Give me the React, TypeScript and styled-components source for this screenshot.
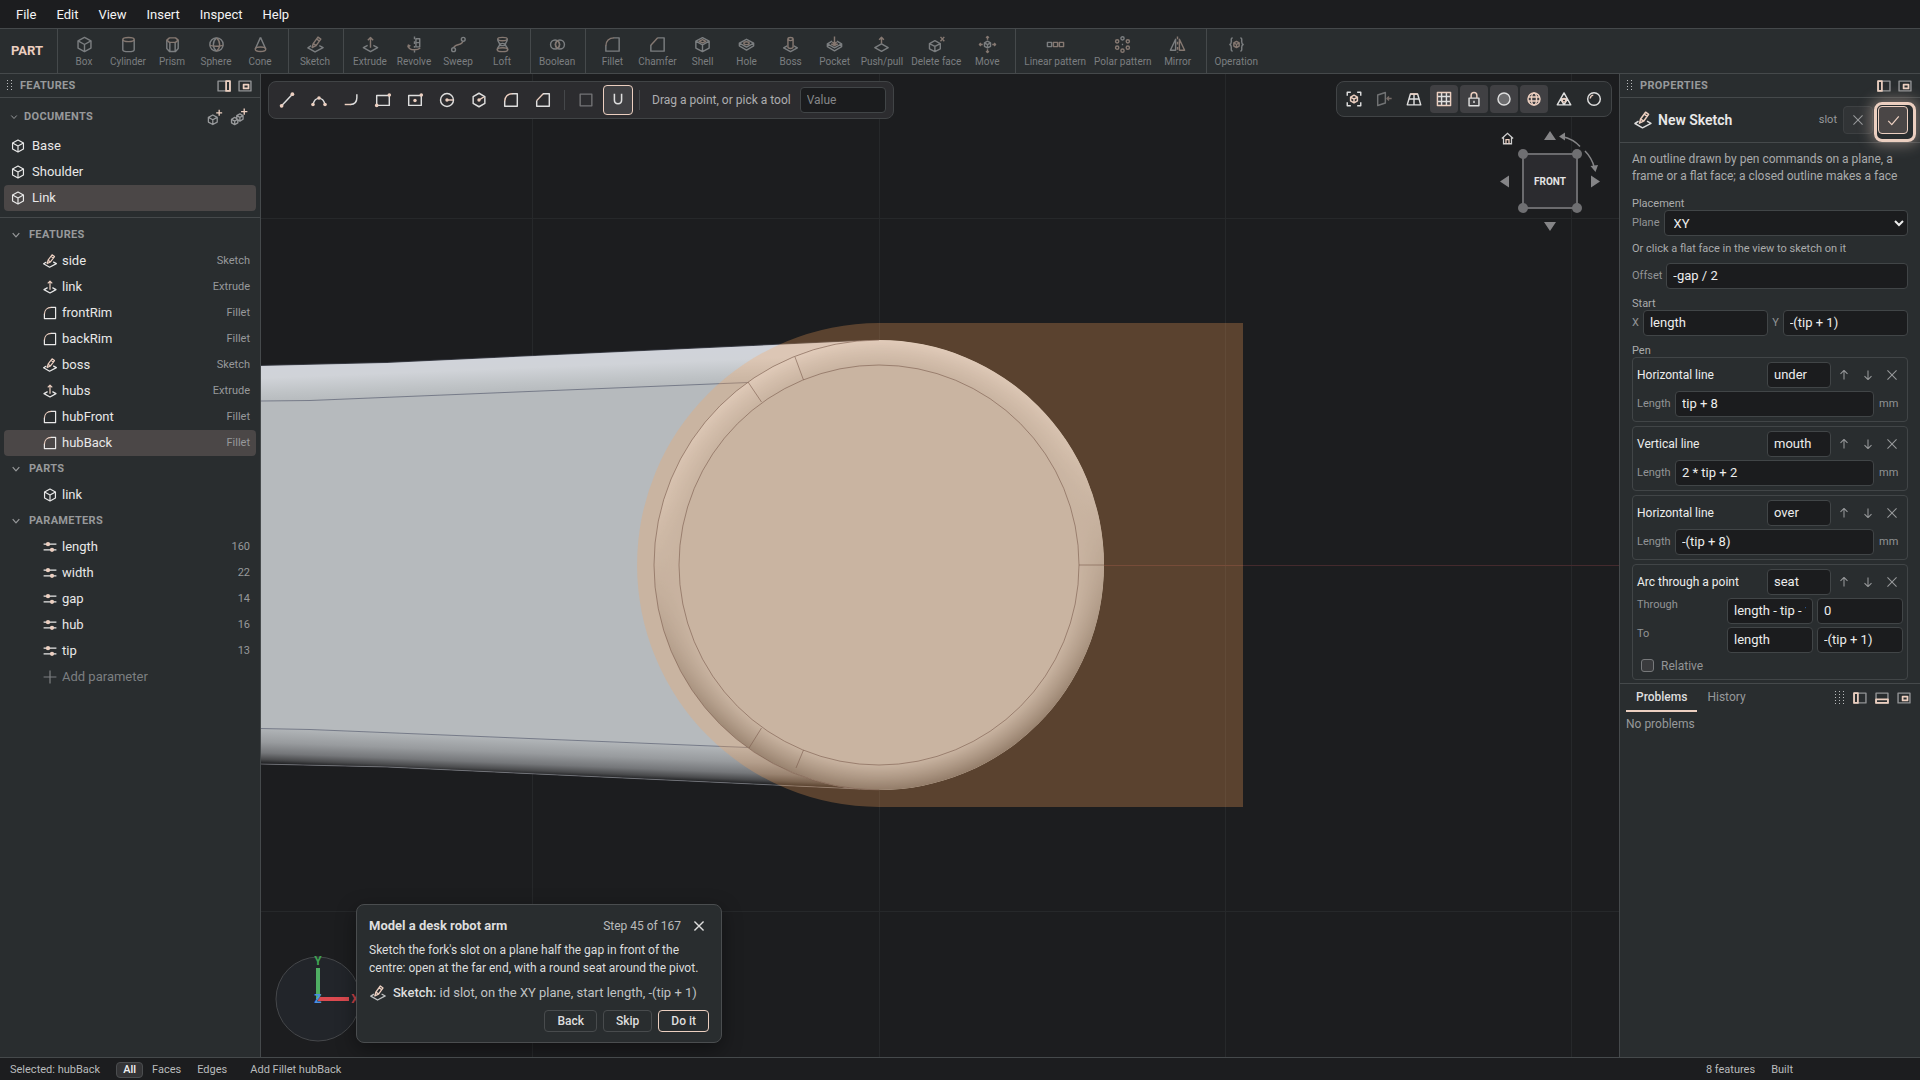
import React from "react";
import styled, { createGlobalStyle, css } from "styled-components";

const c = {
  dark: "#1c1d1f",
  panel: "#292d2f",
  line: "#45494b",
  text: "#dedede",
  soft: "#b9bbbc",
  dim: "#97999b",
  faint: "#707375",
  accent: "#eccfc0",
  selected: "#4b4747",
  float: "#2c2c2f",
};

const Global = createGlobalStyle`
  *, *::before, *::after { box-sizing: border-box; }
  html, body, #root { height: 100%; }
  body {
    margin: 0;
    background: ${c.dark};
    color: ${c.text};
    font: 400 13px/16px Roboto, "Liberation Sans", sans-serif;
    overflow: hidden;
  }
  button, input, select { font: inherit; color: inherit; margin: 0; }
  button { background: none; border: 0; padding: 0; cursor: pointer; }
  h2, h3, p, ul { margin: 0; padding: 0; font: inherit; list-style: none; }
`;

/* ---------- icons ---------- */

const a = { stroke: c.accent };
const af = { fill: c.accent, stroke: "none" };

const glyphs: Record<string, React.ReactNode> = {
  box: (
    <>
      <path d="M10 2.5 16.8 6.2v7.6L10 17.5l-6.8-3.7V6.2z" />
      <path d="M3.2 6.2 10 10l6.8-3.8M10 10v7.5" />
    </>
  ),
  cylinder: (
    <>
      <path d="M4 4.8v10.6c0 1.2 2.7 2.1 6 2.1s6-.9 6-2.1V4.8" />
      <ellipse {...a} cx="10" cy="4.8" rx="6" ry="2.2" />
    </>
  ),
  prism: (
    <>
      <path d="M4 5.5v8.8l2.8 3h6.4l2.8-3V5.5M7.2 8v9M12.8 8v9" />
      <path {...a} d="M4 5.4 6.8 3h6.4L16 5.4l-2.8 2.4H6.8z" />
    </>
  ),
  sphere: (
    <>
      <circle cx="10" cy="10" r="7" />
      <path d="M10 3C7.5 5 6.7 7.5 6.7 10s.8 5 3.3 7" />
      <path {...a} d="M3 10.5c2 1.7 12 1.7 14 0M10 3c2.500 2 3.300 4.500 3.300 7s-.8 5-3.300 7" />
    </>
  ),
  cone: (
    <>
      <path d="M10 2.5 4.500 14.800M10 2.500l5.500 12.300" />
      <ellipse {...a} cx="10" cy="15" rx="5.5" ry="2.3" />
    </>
  ),
  sketch: (
    <>
      <path d="M5.500 11.200 2 13.500l7.500 4.300 8.500-4.500-4-2.200" />
      <path {...a} d="M6.500 13.200 7.600 9l5-6.800 3 2.200-5 6.800zM7.700 9l3 2.200M11.200 4.200l3 2.200" />
    </>
  ),
  extrude: (
    <>
      <path d="M7 10.800 2.500 13.300 10 17.500l7.500-4.200L13 10.800" />
      <path {...a} d="M10 13.500V2.800M7.200 5.500 10 2.700l2.800 2.800" />
    </>
  ),
  revolve: (
    <>
      <path d="M10 1.500v3M10 6.500v3M10 11.500v2M10 16v2.500" />
      <path d="M11.500 4h4v8.500h-4zM11.500 8h4" />
      <path {...a} d="M3.500 11c0 3 3 4.600 6.500 4.600 2.500 0 4.500-.6 6-2M3 13l.5-2.400 2.200 1" />
    </>
  ),
  sweep: (
    <>
      <path {...a} d="M5 13.500c0-4 9.500-2.500 9.500-7" />
      <circle cx="4.800" cy="15.500" r="2" />
      <circle cx="15" cy="4.500" r="2" />
    </>
  ),
  loft: (
    <>
      <ellipse {...a} cx="10" cy="4.300" rx="5" ry="1.800" />
      <path d="M5 4.500c0 3 2 3.500 2 5.500s-2.500 3-2.500 5.500M15 4.500c0 3-2 3.500-2 5.500s2.500 3 2.500 5.500" />
      <ellipse cx="10" cy="10" rx="3" ry="1.200" />
      <ellipse {...a} cx="10" cy="15.500" rx="5.500" ry="2" />
    </>
  ),
  boolean: (
    <>
      <circle cx="7.500" cy="10" r="4.800" />
      <circle cx="12.500" cy="10" r="4.800" />
      <path {...a} d="M10 6c-2.800 2.400-2.800 5.600 0 8 2.800-2.400 2.800-5.600 0-8z" />
    </>
  ),
  fillet: (
    <>
      <path d="M11 3h6v14H3v-6" />
      <path {...a} d="M3 11.500C3 6.500 6.500 3 11.500 3" />
    </>
  ),
  chamfer: (
    <>
      <path d="M10 3h7v14H3v-6.500" />
      <path {...a} d="M3 10.700 10.200 3" />
    </>
  ),
  shell: (
    <>
      <path d="M10 2.800 17 6.500v7.200l-7 3.800-7-3.800V6.500zM3 6.500l7 3.800 7-3.800M10 10.300v7.200" />
      <path {...a} d="M10 4.800 13.500 6.600 10 8.400 6.500 6.600z" />
    </>
  ),
  hole: (
    <>
      <path d="M10 4.500 17.500 8.500v3L10 15.800l-7.500-4.300v-3zM2.500 8.500 10 12.700l7.500-4.200" />
      <ellipse {...a} cx="10" cy="8.600" rx="2.800" ry="1.500" />
    </>
  ),
  boss: (
    <>
      <path d="M6.500 11.500 2.800 13.500l7.200 4 7.200-4-3.700-2" />
      <path {...a} d="M7.300 4.500v8.200c0 2 5.400 2 5.400 0V4.500" />
      <ellipse {...a} cx="10" cy="4.300" rx="2.700" ry="1.600" />
    </>
  ),
  pocket: (
    <>
      <path d="M7.500 6.500 2.500 9.300v3L10 16.700l7.500-4.400v-3l-5-2.800M2.500 9.300 10 13.500l7.500-4.200" />
      <path {...a} d="M10 1.500v8M7.800 7.500 10 9.700l2.200-2.200M6.500 9.300l3.500 2 3.500-2" />
    </>
  ),
  push: (
    <>
      <path {...a} d="M10 9V2.500M7.500 5 10 2.500 12.500 5" />
      <path d="M10 9.300 17 13.200l-7 4-7-4z" />
    </>
  ),
  deleteFace: (
    <>
      <path d="M8.300 6 14 9v5.500l-5.700 3-5.700-3V9zM2.600 9l5.700 3L14 9M8.300 12v5.500" />
      <path {...a} d="m14.200 2 4 4.500M18.200 2l-4 4.500" />
    </>
  ),
  move: (
    <>
      <path {...a} d="M10 5V1.500M8.500 3 10 1.500 11.500 3M10 15v3.500M8.500 17l1.500 1.500 1.500-1.500M5 10H1.500M3 8.500 1.500 10 3 11.500M15 10h3.500M17 8.500l1.500 1.500-1.500 1.500" />
      <path d="m10 6.500 3.200 1.800v3.600L10 13.600l-3.200-1.700V8.300zM6.800 8.300l3.200 1.800 3.200-1.800M10 10.100v3.500" />
    </>
  ),
  linear: (
    <>
      <path d="M1.500 7.800h4.400v4.400H1.500z" />
      <path {...a} d="M7.800 7.800h4.400v4.400H7.800zM14.100 7.800h4.400v4.400h-4.400z" />
    </>
  ),
  polar: (
    <>
      <circle cx="10" cy="3.500" r="1.700" />
      <circle {...a} cx="15.600" cy="6.700" r="1.700" />
      <circle {...a} cx="15.600" cy="13.300" r="1.700" />
      <circle {...a} cx="10" cy="16.500" r="1.700" />
      <circle {...a} cx="4.400" cy="13.300" r="1.700" />
      <circle {...a} cx="4.400" cy="6.700" r="1.700" />
      <path d="M9.300 10h1.400" />
    </>
  ),
  mirror: (
    <>
      <path d="M8 4.500 2.500 16H8z" />
      <path {...a} d="M12 4.500 17.500 16H12zM10 1.500v3M10 7v3M10 12.500v3M10 17.500v1" />
    </>
  ),
  operation: (
    <>
      <path d="M6 3C4 3 4.500 5 4.500 7S4 9.500 3 10c1 .5 1.500 1 1.500 3S4 17 6 17M14 3c2 0 1.500 2 1.500 4s.5 2.500 1.500 3c-1 .5-1.500 1-1.500 3s.5 4-1.500 4" />
      <path {...a} d="m10 6.800 2.800 1.600v3.200L10 13.200l-2.800-1.600V8.400zM7.200 8.400 10 10l2.800-1.600M10 10v3.200" />
    </>
  ),
  param: (
    <>
      <path d="M2 6.500h16M2 13.500h16" />
      <circle {...af} cx="7.500" cy="6.500" r="2.700" />
      <circle {...af} cx="12.500" cy="13.500" r="2.700" />
    </>
  ),
  plus: <path d="M10 2v16M2 10h16" />,
  chevron: <path d="m4.500 7 5.500 6 5.500-6" />,
  newPart: (
    <>
      <path d="m8 7 5.200 2.800v5.600L8 18.300l-5.200-2.900V9.800zM2.800 9.800 8 12.600l5.200-2.800M8 12.600v5.700" />
      <path {...a} d="M15.500 1v7M12 4.500h7" />
    </>
  ),
  newAssembly: (
    <>
      <path d="m5.200 10.500 3.500 2v4l-3.500 2-3.500-2v-4zM1.700 12.500l3.500 2 3.500-2M5.200 14.500v4M11 6.500l3.500 2v4l-3.500 2-3.500-2v-4zM7.500 8.500l3.500 2 3.500-2M11 10.500v4" />
      <path {...a} d="M15.800.5v7M12.300 4h7" />
    </>
  ),
  segment: (
    <>
      <path d="m4.500 15.800 11-11.600" />
      <circle {...af} cx="4" cy="16.500" r="2.100" />
      <circle {...af} cx="16" cy="3.500" r="2.100" />
    </>
  ),
  arc: (
    <>
      <path d="M3.500 14.500C4.500 10.500 7 8.200 10 8.200s5.500 2.300 6.500 6.300" />
      <circle {...af} cx="3.300" cy="15" r="2" />
      <circle {...af} cx="16.700" cy="15" r="2" />
      <circle {...af} cx="10" cy="7.800" r="2" />
    </>
  ),
  tangent: (
    <>
      <path d="M16.500 3.500v4c0 5-3 7.500-7 7.500" />
      <path {...a} d="M10 15H3" />
    </>
  ),
  rect: (
    <>
      <path d="M3 5h14v11H3z" />
      <circle {...af} cx="3" cy="16" r="2" />
      <circle {...af} cx="17" cy="4.500" r="2" />
    </>
  ),
  rectCentre: (
    <>
      <path d="M3 5h14v11H3z" />
      <circle {...af} cx="10" cy="10.500" r="1.900" />
      <circle {...af} cx="17" cy="4.500" r="2" />
    </>
  ),
  circle: (
    <>
      <circle cx="10" cy="10" r="7.200" />
      <path {...a} d="M10 10h7" />
      <circle {...af} cx="10" cy="10" r="1.900" />
    </>
  ),
  hexagon: (
    <>
      <path d="m10 2.500 6.500 3.700v7.600L10 17.500l-6.500-3.700V6.200z" />
      <path {...a} d="m10 10 5.500-3.500" />
      <circle {...af} cx="10" cy="10" r="1.900" />
    </>
  ),
  construction: <path d="M3.500 3.500h13v13h-13z" />,
  magnet: <path d="M6 3v7c0 5.500 8 5.500 8 0V3" />,
  fit: (
    <>
      <path d="M2.500 6.500v-4h4M13.500 2.500h4v4M17.500 13.500v4h-4M6.500 17.500h-4v-4" />
      <path {...a} d="m10 5.800 3.800 2.100v4.200L10 14.200l-3.800-2.100V7.900zM6.200 7.900l3.800 2.200 3.800-2.200M10 10.100v4.100" />
    </>
  ),
  lookAt: (
    <>
      <path d="M3 5.500 11.500 2.800v11.700L3 17.200z" />
      <path {...a} d="M18.500 9.500h-5M15.500 7.300l-2.200 2.200 2.200 2.200" />
    </>
  ),
  perspective: (
    <>
      <path d="M6 4.500h8l3.500 12h-15zM4.500 10h11M10 4.500v12" />
      <path {...a} d="M6 4.500h8" />
    </>
  ),
  grid: (
    <>
      <path d="M7.300 2.700v14.600M12.700 2.700v14.600M2.700 7.300h14.600M2.700 12.700h14.600" />
      <path {...a} d="M2.700 2.700h14.600v14.600H2.700z" />
    </>
  ),
  lock: (
    <>
      <path d="M4.500 9h11v8.500h-11zM10 12v2.500" />
      <path {...a} d="M6.800 9V6c0-4.200 6.400-4.200 6.400 0v3" />
    </>
  ),
  shaded: <circle cx="10" cy="10" r="6.700" fill="#6c6c6e" />,
  globe: (
    <>
      <circle {...a} cx="10" cy="10" r="6.700" />
      <ellipse {...a} cx="10" cy="10" rx="2.800" ry="6.700" />
      <path {...a} d="M3.500 7.800h13M3.500 12.200h13" />
    </>
  ),
  mesh: (
    <>
      <path d="M10 3.200 17.500 16.500h-15zM6.200 10l3.800 6.500 3.800-6.500z" />
      <circle {...a} cx="10" cy="11.500" r="2" />
    </>
  ),
  gloss: (
    <>
      <circle cx="10" cy="10" r="7" />
      <path {...a} d="M5.800 9.500c.2-2 1.500-3.500 3.400-3.800" />
    </>
  ),
  up: <path d="M10 16.500v-13M5 8.500l5-5 5 5" />,
  down: <path d="M10 3.500v13M5 11.500l5 5 5-5" />,
  close: <path d="m3.500 3.500 13 13M16.500 3.500l-13 13" />,
  check: <path d="m3 10.500 4.700 5L17 4.500" />,
  home: (
    <>
      <path d="m2.500 10 7.500-7 7.500 7M4.700 8.500V17h10.600V8.500" />
      <path {...a} d="M8 17v-5.500h4V17" />
    </>
  ),
  dockRight: (
    <>
      <path d="M1.500 3h17v14h-17z" stroke="#919395" />
      <path {...a} strokeWidth="2.500" d="M13 3h5.500v14H13z" />
    </>
  ),
  dockLeft: (
    <>
      <path d="M1.500 3h17v14h-17z" stroke="#919395" />
      <path {...a} strokeWidth="2.500" d="M1.500 3H7v14H1.500z" />
    </>
  ),
  dockBottom: (
    <>
      <path d="M1.500 3h17v14h-17z" stroke="#919395" />
      <path {...a} strokeWidth="2.500" d="M1.500 12h17v5h-17z" />
    </>
  ),
  popOut: (
    <>
      <path d="M1.500 3h17v14h-17z" stroke="#919395" />
      <path {...a} strokeWidth="2.500" d="M8 8h7v5.500H8z" />
    </>
  ),
};

const Svg = styled.svg`
  display: block;
  flex: none;
  fill: none;
  stroke: currentColor;
  stroke-linejoin: round;
`;

function Icon({ name, size = 16, weight = 1.5 }: { name: string; size?: number; weight?: number }) {
  return (
    <Svg width={size} height={size} viewBox="0 0 20 20" strokeWidth={weight} aria-hidden="true">
      {glyphs[name]}
    </Svg>
  );
}

const GripSvg = styled.svg`
  display: block;
  flex: none;
  fill: ${c.soft};
`;

function Grip({ cols = 2, rows = 4 }: { cols?: number; rows?: number }) {
  const dots = [];
  for (let y = 0; y < rows; y++)
    for (let x = 0; x < cols; x++) dots.push(<rect key={`${x}-${y}`} x={x * 4} y={y * 3} width="1" height="1" />);
  return (
    <GripSvg width={cols * 4 - 2} height={rows * 3} aria-hidden="true">
      {dots}
    </GripSvg>
  );
}

/* ---------- frame ---------- */

const Shell = styled.div`
  display: grid;
  grid-template-rows: auto auto 1fr auto;
  height: 100vh;
`;

const MenuBar = styled.nav`
  display: flex;
  height: 28px;
  padding: 2px 6px 0;
`;

const MenuButton = styled.button`
  padding: 0 10px;
  color: #f4f4f4;
`;

const Ribbon = styled.div`
  display: flex;
  height: 46px;
  background: ${c.panel};
  border-top: 1px solid ${c.line};
  border-bottom: 1px solid ${c.line};
`;

const Mode = styled.div`
  display: flex;
  align-items: center;
  width: 58px;
  padding-left: 11px;
  font-weight: 700;
  color: ${c.accent};
  border-right: 1px solid ${c.line};
`;

const RibbonGroup = styled.div`
  display: flex;
  padding: 0 6px 0 4px;
  border-right: 1px solid ${c.line};
  &:last-child { border-right: 0; }
`;

const RibbonButton = styled.button`
  display: flex;
  flex-direction: column;
  align-items: center;
  gap: 1px;
  min-width: 44px;
  padding: 6px 4px 0;
  font-size: 10px;
  line-height: 14px;
  color: #7b7e80;
  svg [stroke="${c.accent}"] { stroke: #857871; }
`;

const Main = styled.div`
  display: grid;
  grid-template-columns: 261px minmax(0, 1fr) 301px;
  min-height: 0;
`;

const StatusBar = styled.footer`
  display: flex;
  align-items: center;
  height: 23px;
  padding: 2px 10px 0;
  border-top: 1px solid ${c.line};
  font-size: 11px;
  line-height: 14px;
  color: ${c.soft};
`;

const StatusText = styled.span`
  padding-right: 16px;
`;

const StatusEnd = styled.div`
  display: flex;
  margin-left: auto;
  padding-right: 101px;
`;

const Filters = styled.div`
  display: flex;
  gap: 2px;
  padding-right: 16px;
`;

const Filter = styled.button<{ $on?: boolean }>`
  height: 16px;
  padding: 0 6px;
  border: 1px solid transparent;
  border-radius: 4px;
  ${(p) => p.$on && css`
    background: #343436;
    border-color: #4b4d4f;
    color: #f0f0f0;
    font-weight: 500;
  `}
`;

/* ---------- side panels ---------- */

const Side = styled.aside<{ $right?: boolean }>`
  display: flex;
  flex-direction: column;
  min-width: 0;
  min-height: 0;
  background: ${c.panel};
  ${(p) => (p.$right ? "border-left" : "border-right")}: 1px solid ${c.line};
`;

const PanelHeader = styled.header`
  display: flex;
  align-items: center;
  gap: 7px;
  height: 24px;
  padding: 0 8px 0 7px;
  border-bottom: 1px solid ${c.line};
`;

const Caps = styled.h2`
  flex: 1;
  font-size: 11px;
  font-weight: 700;
  letter-spacing: 0.03em;
  text-transform: uppercase;
  color: ${c.dim};
`;

const IconButton = styled.button<{ $w?: number }>`
  display: grid;
  place-items: center;
  width: ${(p) => p.$w ?? 14}px;
  height: 22px;
  color: ${c.dim};
`;

const SectionHead = styled.div<{ $tall?: boolean }>`
  display: flex;
  align-items: center;
  gap: ${(p) => (p.$tall ? 5 : 7)}px;
  height: ${(p) => (p.$tall ? 35 : 26)}px;
  padding: ${(p) => (p.$tall ? "3px 11px 0 9px" : "0 10px")};
  color: ${c.dim};
`;

const Block = styled.section<{ $ruled?: boolean }>`
  padding-bottom: ${(p) => (p.$ruled ? 6 : 0)}px;
  margin-bottom: ${(p) => (p.$ruled ? 4 : 0)}px;
  border-bottom: ${(p) => (p.$ruled ? 1 : 0)}px solid ${c.line};
`;

const Row = styled.button<{ $on?: boolean; $deep?: boolean; $muted?: boolean }>`
  display: flex;
  align-items: center;
  gap: ${(p) => (p.$deep ? 4 : 6)}px;
  width: calc(100% - 8px);
  height: 26px;
  margin: 0 4px;
  padding: 0 6px 0 ${(p) => (p.$deep ? 38 : 6)}px;
  border-radius: 4px;
  text-align: left;
  color: ${(p) => (p.$muted ? "#7c7f81" : "#e8e8e8")};
  background: ${(p) => (p.$on ? c.selected : "transparent")};
`;

const RowNote = styled.span`
  margin-left: auto;
  font-size: 11px;
  color: ${c.dim};
`;

/* ---------- viewport ---------- */

const Viewport = styled.main`
  position: relative;
  min-width: 0;
  overflow: hidden;
  background: ${c.dark};
`;

const Scene = styled.svg`
  display: block;
  width: 100%;
  height: 100%;
`;

const Floating = styled.div<{ $side: "left" | "right" }>`
  position: absolute;
  top: 7px;
  ${(p) => p.$side}: 7px;
  display: flex;
  align-items: center;
  gap: 2px;
  padding: 3px;
  border: 1px solid #414446;
  border-radius: 8px;
  background: ${(p) => (p.$side === "left" ? c.float : "#272a2c")};
`;

const Tool = styled.button<{ $size: number; $on?: boolean; $ring?: boolean; $off?: boolean }>`
  display: grid;
  place-items: center;
  width: ${(p) => p.$size}px;
  height: ${(p) => p.$size}px;
  border: 1px solid ${(p) => (p.$ring ? c.accent : "transparent")};
  border-radius: 4px;
  background: ${(p) => (p.$on ? "#404043" : "transparent")};
  opacity: ${(p) => (p.$off ? 0.4 : 1)};
`;

const ToolRule = styled.span`
  width: 1px;
  height: 20px;
  margin: 0 4px;
  background: #45474a;
`;

const ToolHint = styled.label`
  padding: 0 7px 0 6px;
  font-size: 12px;
  color: #adaeb0;
`;

const Field = styled.input`
  width: 100%;
  min-width: 0;
  height: 26px;
  padding: 0 6px 1px;
  border: 1px solid #414547;
  border-radius: 4px;
  background: #1b1c1e;
  color: #ededed;
  outline: 0;
  &::placeholder { color: #858789; opacity: 1; }
`;

const ValueBox = styled.div`
  display: flex;
  width: 86px;
  margin-right: 4px;
  font-size: 12px;
`;

const Cube = styled.svg`
  position: absolute;
  top: 50px;
  right: 16px;
`;

const Gizmo = styled.svg`
  position: absolute;
  left: 13px;
  bottom: 14px;
`;

const Tour = styled.section`
  position: absolute;
  left: 95px;
  bottom: 14px;
  width: 366px;
  padding: 12px;
  border: 1px solid #4a4d4f;
  border-radius: 8px;
  background: ${c.panel};
  box-shadow: 0 6px 20px rgba(0, 0, 0, 0.4);
`;

const TourHead = styled.div`
  display: flex;
  align-items: center;
  height: 18px;
  margin-bottom: 6px;
`;

const TourTitle = styled.h2`
  flex: 1;
  font-weight: 700;
`;

const TourStep = styled.span`
  font-size: 12px;
  color: ${c.soft};
`;

const TourClose = styled.button`
  display: grid;
  place-items: center;
  width: 20px;
  height: 18px;
  margin-left: 8px;
`;

const TourText = styled.p`
  font-size: 12px;
  line-height: 18px;
  color: #dcdddd;
`;

const TourAction = styled.p`
  display: flex;
  align-items: center;
  gap: 6px;
  height: 32px;
  margin-bottom: 1px;
  color: #c0c2c3;
  b { font-weight: 500; color: ${c.text}; }
`;

const TourButtons = styled.div`
  display: flex;
  justify-content: flex-end;
  gap: 6px;
  margin-bottom: -2px;
`;

const Action = styled.button<{ $main?: boolean }>`
  height: 22px;
  padding: 0 12px;
  border: 1px solid ${(p) => (p.$main ? c.accent : "#484b4d")};
  border-radius: 4px;
  font-size: 12px;
  font-weight: 500;
`;

/* ---------- properties ---------- */

const EditHead = styled.div`
  display: flex;
  align-items: center;
  gap: 5px;
  height: 45px;
  padding: 0 12px 0 13px;
  border-bottom: 1px solid ${c.line};
`;

const EditTitle = styled.h2`
  flex: 1;
  font-size: 14px;
  font-weight: 600;
  color: #e8e8e8;
`;

const Small = styled.span`
  padding-right: 1px;
  font-size: 11px;
  color: ${c.dim};
`;

const Cancel = styled.button`
  display: grid;
  place-items: center;
  width: 30px;
  height: 28px;
  border: 1px solid #3d4042;
  border-radius: 4px;
  background: #313436;
  color: ${c.dim};
`;

const Confirm = styled(Cancel)`
  position: relative;
  border-color: ${c.accent};
  background: #4a4646;
  color: ${c.accent};
  &::after {
    content: "";
    position: absolute;
    inset: -5px -9px -9px -5px;
    border: 3px solid ${c.accent};
    border-radius: 8px;
    box-shadow: 0 0 14px 3px rgba(236, 207, 192, 0.4);
  }
`;

const Form = styled.form`
  display: flex;
  flex-direction: column;
  padding: 8px 12px 3px;
  font-size: 12px;
`;

const Intro = styled.p`
  margin-bottom: 11px;
  line-height: 17px;
  color: #a9abac;
`;

const Label = styled.label`
  font-size: 11px;
  line-height: 14px;
  color: #929496;
`;

const GroupLabel = styled.div`
  padding-top: 2px;
  font-size: 11px;
  line-height: 12px;
  color: #a9abac;
`;

const Hint = styled.p`
  margin: 6px 0 7px;
  font-size: 11px;
  line-height: 14px;
  color: #a9abac;
`;

const Line = styled.div<{ $after?: number }>`
  display: flex;
  align-items: center;
  gap: 4px;
  margin-bottom: ${(p) => p.$after ?? 0}px;
  font-size: 13px;
`;

const Select = styled.select`
  flex: 1;
  height: 26px;
  padding: 0 5px;
  border: 1px solid #414547;
  border-radius: 4px;
  background: #1b1c1e;
  color: #ededed;
`;

const Cards = styled.ul`
  display: grid;
  gap: 4px;
`;

const Card = styled.li`
  display: grid;
  gap: 3px;
  padding: 4px;
  border: 1px solid #414547;
  border-radius: 4px;
`;

const CardHead = styled.div`
  display: grid;
  grid-template-columns: 1fr 64px 24px 24px 24px;
  align-items: center;
`;

const CardButton = styled(IconButton)`
  width: 24px;
  padding-left: 2px;
`;

const CardTitle = styled.h3`
  font-size: 12px;
  color: #ededed;
`;

const LengthRow = styled.div`
  display: grid;
  grid-template-columns: 33px 1fr 24px;
  align-items: center;
  column-gap: 5px;
  font-size: 13px;
`;

const PointRow = styled.div`
  display: grid;
  grid-template-columns: 1fr 86px 86px;
  column-gap: 4px;
  font-size: 13px;
`;

const TickRow = styled.div`
  display: flex;
  align-items: center;
  gap: 7px;
  height: 19px;
  padding-left: 4px;
  label { font-size: 12px; }
`;

const Tick = styled.input`
  appearance: none;
  width: 13px;
  height: 13px;
  border: 1px solid #77797b;
  border-radius: 3px;
  background: #3a3b3d;
`;

const Dock = styled.section`
  border-top: 1px solid ${c.line};
`;

const Tabs = styled.div`
  display: flex;
  align-items: center;
  height: 28px;
  padding: 0 9px 0 6px;
`;

const Tab = styled.button<{ $on?: boolean }>`
  height: 28px;
  padding: 0 10px;
  font-size: 12px;
  font-weight: ${(p) => (p.$on ? 500 : 400)};
  color: ${(p) => (p.$on ? c.text : c.dim)};
  border-bottom: 2px solid ${(p) => (p.$on ? c.accent : "transparent")};
`;

const DockTools = styled.div`
  display: flex;
  align-items: center;
  gap: 8px;
  margin-left: auto;
`;

const Empty = styled.p`
  padding: 4px 6px;
  font-size: 12px;
  color: ${c.dim};
`;

/* ---------- data ---------- */

const ribbon: [string, string][][] = [
  [["box", "Box"], ["cylinder", "Cylinder"], ["prism", "Prism"], ["sphere", "Sphere"], ["cone", "Cone"]],
  [["sketch", "Sketch"]],
  [["extrude", "Extrude"], ["revolve", "Revolve"], ["sweep", "Sweep"], ["loft", "Loft"]],
  [["boolean", "Boolean"]],
  [
    ["fillet", "Fillet"], ["chamfer", "Chamfer"], ["shell", "Shell"], ["hole", "Hole"], ["boss", "Boss"],
    ["pocket", "Pocket"], ["push", "Push/pull"], ["deleteFace", "Delete face"], ["move", "Move"],
  ],
  [["linear", "Linear pattern"], ["polar", "Polar pattern"], ["mirror", "Mirror"]],
  [["operation", "Operation"]],
];

const tree: { title: string; rows: [string, string, string?][] }[] = [
  {
    title: "Features",
    rows: [
      ["sketch", "side", "Sketch"], ["extrude", "link", "Extrude"], ["fillet", "frontRim", "Fillet"],
      ["fillet", "backRim", "Fillet"], ["sketch", "boss", "Sketch"], ["extrude", "hubs", "Extrude"],
      ["fillet", "hubFront", "Fillet"], ["fillet", "hubBack", "Fillet"],
    ],
  },
  { title: "Parts", rows: [["box", "link"]] },
  {
    title: "Parameters",
    rows: [
      ["param", "length", "160"], ["param", "width", "22"], ["param", "gap", "14"],
      ["param", "hub", "16"], ["param", "tip", "13"],
    ],
  },
];

const drawTools = ["segment", "arc", "tangent", "rect", "rectCentre", "circle", "hexagon", "fillet", "chamfer"];

const viewTools: [string, string, boolean?][] = [
  ["fit", "Fit view"], ["lookAt", "Look at"], ["perspective", "Perspective"], ["grid", "Grid", true],
  ["lock", "Lock", true], ["shaded", "Shaded", true], ["globe", "Edges", true], ["mesh", "Mesh"], ["gloss", "Material"],
];

const pens = [
  { title: "Horizontal line", name: "under", length: "tip + 8" },
  { title: "Vertical line", name: "mouth", length: "2 * tip + 2" },
  { title: "Horizontal line", name: "over", length: "-(tip + 8)" },
];

/* ---------- parts ---------- */

function Drawing() {
  return (
    <Scene viewBox="261 74 1358 983" preserveAspectRatio="xMidYMid slice" role="img" aria-label="Model view">
      <defs>
        <linearGradient id="topBand" gradientUnits="userSpaceOnUse" x1="560" y1="353" x2="561.500" y2="391">
          <stop offset="0" stopColor="#d0d3da" />
          <stop offset="0.350" stopColor="#d0d3d8" />
          <stop offset="0.750" stopColor="#bfc3c6" />
          <stop offset="1" stopColor="#b6babd" />
        </linearGradient>
        <linearGradient id="lowBand" gradientUnits="userSpaceOnUse" x1="561.500" y1="740" x2="560" y2="776">
          <stop offset="0" stopColor="#b2b6b9" />
          <stop offset="0.400" stopColor="#989b9e" />
          <stop offset="0.700" stopColor="#75777a" />
          <stop offset="0.880" stopColor="#4a4b4d" />
          <stop offset="1" stopColor="#1c1d1f" />
        </linearGradient>
        <linearGradient id="rimTone" gradientUnits="userSpaceOnUse" x1="840" y1="340" x2="900" y2="790">
          <stop offset="0" stopColor="#d8dbe0" />
          <stop offset="0.300" stopColor="#c8cccf" />
          <stop offset="0.500" stopColor="#aeb2b5" />
          <stop offset="0.800" stopColor="#7c7f81" />
          <stop offset="1" stopColor="#6a6c6e" />
        </linearGradient>
        <radialGradient id="rimFade" gradientUnits="userSpaceOnUse" cx="879" cy="565" r="225">
          <stop offset="0.888" stopColor="#000" />
          <stop offset="0.950" stopColor="#888" />
          <stop offset="1" stopColor="#fff" />
        </radialGradient>
        <mask id="rimMask">
          <circle cx="879" cy="565" r="225" fill="url(#rimFade)" />
        </mask>
      </defs>

      <g stroke="#26282a">
        <path d="M532.500 0V1130M879.500 0V1130M1225.500 0V1130M1571.500 0V1130M0 218.500H1920M0 911.500H1920" />
        <path d="M879 565.500H1920" stroke="#442a2d" />
      </g>

      <path d="M261 366 387 363 860 341V789L387 767 261 764z" fill="#b6babd" />
      <path d="M261 366 387 363 860 341 748 382 310 400.500 261 401z" fill="url(#topBand)" />
      <path d="M261 728.500 310 729.500 748 748 860 789 387 767 261 764z" fill="url(#lowBand)" />
      <g fill="none" stroke="#666b7c" strokeOpacity="0.800">
        <path d="M261 401 310 400.500 748 382.500M261 728.500 310 729.500 748 747.500" />
        <path d="M261 764 387 767 860 789" stroke="#8c8e96" strokeOpacity="0.600" />
        <path d="M261 365.500 387 362.500 860 340.500" strokeOpacity="0.400" />
      </g>

      <circle cx="879" cy="565" r="225" fill="#b6babd" />
      <circle cx="879" cy="565" r="225" fill="url(#rimTone)" mask="url(#rimMask)" />
      <g fill="none" stroke="#4a4048" strokeOpacity="0.600">
        <circle cx="879" cy="565" r="200" />
        <path d="M879 340A225 225 0 0 0 879 790" />
        <path d="M795 357 803.500 380M748 382 761.500 402M803.500 750 796 768M761.500 728 749 748M1079 565H1104" />
      </g>

      <path d="M1243 323H879A242 242 0 0 0 879 807H1243z" fill="#fca45b" fillOpacity="0.280" />
    </Scene>
  );
}

function ViewCube() {
  return (
    <Cube width="106" height="110" viewBox="1497 124 106 110" fill="none">
      <g transform="translate(1500 131) scale(0.750)" stroke="#cfcfcf" strokeWidth="1.700">
        {glyphs.home}
      </g>
      <g fill="#858587">
        <path d="M1550 131l6 9h-12zM1550 231l6-9h-12zM1500 181.500l9-6v12zM1600 181.500l-9-6v12z" />
        <path d="M1559 136.500l6-4v8zM1595.500 172l-5-6 7.500-1z" />
      </g>
      <path d="M1562 136.500c7 1.500 13 4.500 18 10M1585 151c5 5 8 11 9.500 17" stroke="#858587" strokeWidth="1.500" />
      <rect x="1523" y="154" width="54" height="54" fill="#2b2b2f" stroke="#6b6b6e" strokeWidth="2" />
      <g fill="#6f6f72">
        <circle cx="1523" cy="154" r="5" />
        <circle cx="1577" cy="154" r="5" />
        <circle cx="1523" cy="208" r="5" />
        <circle cx="1577" cy="208" r="5" />
      </g>
      <text x="1550" y="185" fill="#e4e4e4" fontFamily="Roboto, sans-serif" fontSize="10" fontWeight="700" textAnchor="middle">
        FRONT
      </text>
    </Cube>
  );
}

function AxisGizmo() {
  return (
    <Gizmo width="88" height="88" viewBox="274 955 88 88" fill="none" fontFamily="Roboto, sans-serif" fontSize="12" fontWeight="700" textAnchor="middle">
      <circle cx="318" cy="999" r="42" fill="#22252a" stroke="#45474a" />
      <path d="M318 999V968" stroke="#4fae63" strokeWidth="4" />
      <path d="M318 999H349" stroke="#dc4a50" strokeWidth="4" />
      <text x="318" y="965" fill="#3fa352">Y</text>
      <text x="355" y="1003" fill="#cf4248">X</text>
      <text x="318" y="1003" fill="#4a90e2">Z</text>
    </Gizmo>
  );
}

function PenHead({ title, name }: { title: string; name: string }) {
  return (
    <CardHead>
      <CardTitle>{title}</CardTitle>
      <Line>
        <Field aria-label="Name" defaultValue={name} />
      </Line>
      <CardButton type="button" aria-label="Move up"><Icon name="up" size={14} /></CardButton>
      <CardButton type="button" aria-label="Move down"><Icon name="down" size={14} /></CardButton>
      <CardButton type="button" aria-label="Remove"><Icon name="close" size={14} /></CardButton>
    </CardHead>
  );
}

function Features() {
  return (
    <Side>
      <PanelHeader>
        <Grip />
        <Caps>Features</Caps>
        <IconButton aria-label="Dock right"><Icon name="dockRight" size={14} weight={2} /></IconButton>
        <IconButton aria-label="Float"><Icon name="popOut" size={14} weight={2} /></IconButton>
      </PanelHeader>
      <Block $ruled>
        <SectionHead $tall>
          <Icon name="chevron" size={10} weight={2} />
          <Caps as="h3">Documents</Caps>
          <IconButton $w={20} aria-label="New part"><Icon name="newPart" size={17} /></IconButton>
          <IconButton $w={20} aria-label="New assembly"><Icon name="newAssembly" size={18} /></IconButton>
        </SectionHead>
        {["Base", "Shoulder", "Link"].map((name) => (
          <Row key={name} $on={name === "Link"}>
            <Icon name="box" size={16} />
            {name}
          </Row>
        ))}
      </Block>
      {tree.map((section) => (
        <Block key={section.title}>
          <SectionHead>
            <Icon name="chevron" size={12} weight={2} />
            <Caps as="h3">{section.title}</Caps>
          </SectionHead>
          {section.rows.map(([icon, name, note]) => (
            <Row key={name} $deep $on={name === "hubBack"}>
              <Icon name={icon} size={16} />
              {name}
              {note && <RowNote>{note}</RowNote>}
            </Row>
          ))}
        </Block>
      ))}
      <Row $deep $muted>
        <Icon name="plus" size={16} />
        Add parameter
      </Row>
    </Side>
  );
}

function Properties() {
  return (
    <Side $right>
      <PanelHeader>
        <Grip />
        <Caps>Properties</Caps>
        <IconButton aria-label="Dock left"><Icon name="dockLeft" size={14} weight={2} /></IconButton>
        <IconButton aria-label="Float"><Icon name="popOut" size={14} weight={2} /></IconButton>
      </PanelHeader>
      <EditHead>
        <Icon name="sketch" size={20} />
        <EditTitle>New Sketch</EditTitle>
        <Small>slot</Small>
        <Cancel aria-label="Cancel"><Icon name="close" size={14} weight={1.5} /></Cancel>
        <Confirm aria-label="Accept"><Icon name="check" size={15} weight={1.7} /></Confirm>
      </EditHead>
      <Form>
        <Intro>An outline drawn by pen commands on a plane, a frame or a flat face; a closed outline makes a face</Intro>
        <GroupLabel>Placement</GroupLabel>
        <Line>
          <Label htmlFor="plane">Plane</Label>
          <Select id="plane" defaultValue="XY">
            <option>XY</option>
          </Select>
        </Line>
        <Hint>Or click a flat face in the view to sketch on it</Hint>
        <Line $after={7}>
          <Label htmlFor="offset">Offset</Label>
          <Field id="offset" defaultValue="-gap / 2" />
        </Line>
        <GroupLabel>Start</GroupLabel>
        <Line $after={7}>
          <Label htmlFor="startX">X</Label>
          <Field id="startX" defaultValue="length" />
          <Label htmlFor="startY">Y</Label>
          <Field id="startY" defaultValue="-(tip + 1)" />
        </Line>
        <GroupLabel>Pen</GroupLabel>
        <Cards>
          {pens.map((pen) => (
            <Card key={pen.name}>
              <PenHead title={pen.title} name={pen.name} />
              <LengthRow>
                <Label htmlFor={pen.name}>Length</Label>
                <Field id={pen.name} defaultValue={pen.length} />
                <Label as="span">mm</Label>
              </LengthRow>
            </Card>
          ))}
          <Card>
            <PenHead title="Arc through a point" name="seat" />
            <PointRow>
              <Label htmlFor="through">Through</Label>
              <Field id="through" defaultValue="length - tip - 1" />
              <Field aria-label="Through Y" defaultValue="0" />
            </PointRow>
            <PointRow>
              <Label htmlFor="to">To</Label>
              <Field id="to" defaultValue="length" />
              <Field aria-label="To Y" defaultValue="-(tip + 1)" />
            </PointRow>
            <TickRow>
              <Tick type="checkbox" id="relative" />
              <Label htmlFor="relative">Relative</Label>
            </TickRow>
          </Card>
        </Cards>
      </Form>
      <Dock>
        <Tabs>
          <Tab $on>Problems</Tab>
          <Tab>History</Tab>
          <DockTools>
            <Grip cols={3} rows={5} />
            <IconButton aria-label="Dock left"><Icon name="dockLeft" size={14} weight={2} /></IconButton>
            <IconButton aria-label="Dock bottom"><Icon name="dockBottom" size={14} weight={2} /></IconButton>
            <IconButton aria-label="Float"><Icon name="popOut" size={14} weight={2} /></IconButton>
          </DockTools>
        </Tabs>
        <Empty>No problems</Empty>
      </Dock>
    </Side>
  );
}

export default function App() {
  return (
    <Shell>
      <Global />
      <MenuBar>
        {["File", "Edit", "View", "Insert", "Inspect", "Help"].map((m) => (
          <MenuButton key={m}>{m}</MenuButton>
        ))}
      </MenuBar>
      <Ribbon>
        <Mode>PART</Mode>
        {ribbon.map((group) => (
          <RibbonGroup key={group[0][0]}>
            {group.map(([icon, label]) => (
              <RibbonButton key={icon}>
                <Icon name={icon} size={19} />
                {label}
              </RibbonButton>
            ))}
          </RibbonGroup>
        ))}
      </Ribbon>
      <Main>
        <Features />
        <Viewport>
          <Drawing />
          <Floating $side="left">
            {drawTools.map((t) => (
              <Tool key={t} $size={30} aria-label={t}><Icon name={t} size={18} weight={1.6} /></Tool>
            ))}
            <ToolRule />
            <Tool $size={30} $off aria-label="construction"><Icon name="construction" size={18} /></Tool>
            <Tool $size={30} $on $ring aria-label="snap"><Icon name="magnet" size={18} weight={1.7} /></Tool>
            <ToolRule />
            <ToolHint htmlFor="value">Drag a point, or pick a tool</ToolHint>
            <ValueBox>
              <Field id="value" placeholder="Value" />
            </ValueBox>
          </Floating>
          <Floating $side="right">
            {viewTools.map(([icon, label, on]) => (
              <Tool key={icon} $size={28} $on={on} $off={icon === "lookAt"} aria-label={label}>
                <Icon name={icon} size={18} weight={1.6} />
              </Tool>
            ))}
          </Floating>
          <ViewCube />
          <AxisGizmo />
          <Tour>
            <TourHead>
              <TourTitle>Model a desk robot arm</TourTitle>
              <TourStep>Step 45 of 167</TourStep>
              <TourClose aria-label="Close"><Icon name="close" size={14} weight={2} /></TourClose>
            </TourHead>
            <TourText>
              Sketch the fork's slot on a plane half the gap in front of the centre: open at the far end, with a round seat around the pivot.
            </TourText>
            <TourAction>
              <Icon name="sketch" size={18} />
              <span><b>Sketch:</b> id slot, on the XY plane, start length, -(tip + 1)</span>
            </TourAction>
            <TourButtons>
              <Action>Back</Action>
              <Action>Skip</Action>
              <Action $main>Do it</Action>
            </TourButtons>
          </Tour>
        </Viewport>
        <Properties />
      </Main>
      <StatusBar>
        <StatusText>Selected: hubBack</StatusText>
        <Filters>
          <Filter $on>All</Filter>
          <Filter>Faces</Filter>
          <Filter>Edges</Filter>
        </Filters>
        <StatusText>Add Fillet hubBack</StatusText>
        <StatusEnd>
          <StatusText>8 features</StatusText>
          <StatusText>Built</StatusText>
        </StatusEnd>
      </StatusBar>
    </Shell>
  );
}
